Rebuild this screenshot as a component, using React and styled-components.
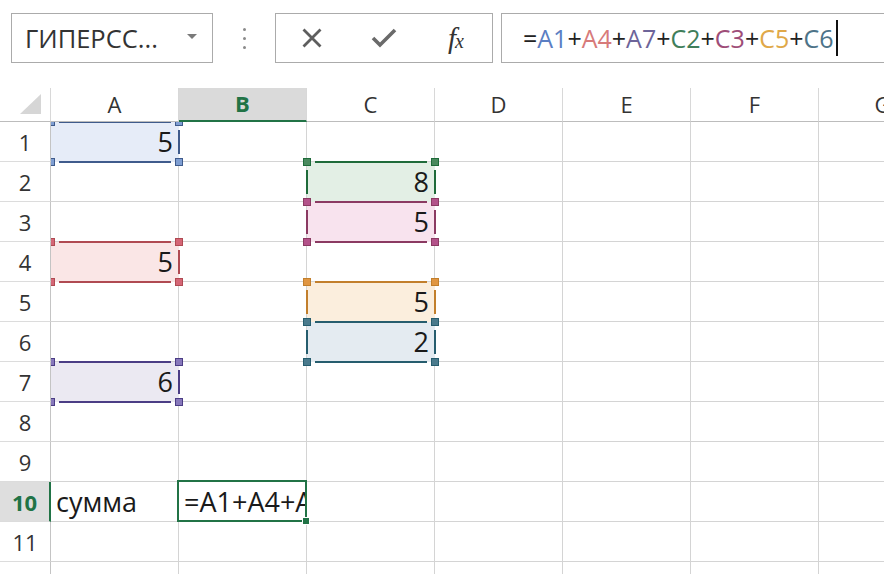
import React from 'react'
import styled, { createGlobalStyle } from 'styled-components'

const COL_W = 128
const ROW_H = 40
const HEAD_W = 51
const HEAD_H = 34
const GREEN = '#217346'

const columns = ['A', 'B', 'C', 'D', 'E', 'F', 'G']
const rows = [1, 2, 3, 4, 5, 6, 7, 8, 9, 10, 11, 12]

const palette = {
  blue: { line: '#3f5b8c', handle: '#7f9ed2', fill: '#e6ecf8', text: '#5a7ec3' },
  red: { line: '#b04a52', handle: '#d46676', fill: '#fae6e6', text: '#d77a7a' },
  purple: { line: '#4b3d85', handle: '#8778bb', fill: '#ebe9f2', text: '#6d6499' },
  green: { line: '#1f6b3a', handle: '#4a8a5e', fill: '#e3efe5', text: '#3f7e5a' },
  magenta: { line: '#8b3a62', handle: '#b3528a', fill: '#f8e3ee', text: '#9e4d78' },
  orange: { line: '#c27f2c', handle: '#e09642', fill: '#fbeedd', text: '#e0a848' },
  teal: { line: '#265d6e', handle: '#4a7a8c', fill: '#e4ebf1', text: '#4d7388' },
}

const ranges = [
  { col: 0, row: 1, c: palette.blue },
  { col: 0, row: 4, c: palette.red },
  { col: 0, row: 7, c: palette.purple },
  { col: 2, row: 2, c: palette.green },
  { col: 2, row: 3, c: palette.magenta },
  { col: 2, row: 5, c: palette.orange },
  { col: 2, row: 6, c: palette.teal },
]

const values = {
  'A1': '5', 'A4': '5', 'A7': '6',
  'C2': '8', 'C3': '5', 'C5': '5', 'C6': '2',
}

const formula = [
  ['=', '#222'], ['A1', palette.blue.text], ['+', '#222'], ['A4', palette.red.text],
  ['+', '#222'], ['A7', palette.purple.text], ['+', '#222'], ['C2', palette.green.text],
  ['+', '#222'], ['C3', palette.magenta.text], ['+', '#222'], ['C5', palette.orange.text],
  ['+', '#222'], ['C6', palette.teal.text],
]

const GlobalStyle = createGlobalStyle`
  html, body {
    margin: 0;
    padding: 0;
    background: #ffffff;
    overflow: hidden;
  }
  body {
    font-family: "Open Sans", "Noto Sans", sans-serif;
    color: #222;
  }
`

const Range = ({ col, row, c }) => (
  <RangeBox $left={col * COL_W} $top={(row - 1) * ROW_H} $fill={c.fill}>
    <EdgeH $color={c.line} $at="top" />
    <EdgeH $color={c.line} $at="bottom" />
    {col > 0 && <EdgeV $color={c.line} $at="left" />}
    <EdgeV $color={c.line} $at="right" />
    <Handle $color={c.handle} $border={c.line} $x="left" $y="top" />
    <Handle $color={c.handle} $border={c.line} $x="right" $y="top" />
    <Handle $color={c.handle} $border={c.line} $x="left" $y="bottom" />
    <Handle $color={c.handle} $border={c.line} $x="right" $y="bottom" />
  </RangeBox>
)

const App = () => {
  return (
    <Page>
      <GlobalStyle />
      <Toolbar>
        <NameBox>
          <span>ГИПЕРСС...</span>
          <DropArrow />
        </NameBox>
        <Dots>
          <Dot />
          <Dot />
          <Dot />
        </Dots>
        <Buttons>
          <ToolButton>
            <svg width="24" height="24" viewBox="0 0 24 24">
              <path d="M3.5 3.5 L20.5 20.5 M20.5 3.5 L3.5 20.5" stroke="#5e5e5e" strokeWidth="2.8" fill="none" />
            </svg>
          </ToolButton>
          <ToolButton>
            <svg width="28" height="24" viewBox="0 0 28 24">
              <path d="M3 12 L10 19 L25 4" stroke="#6a6a6a" strokeWidth="3.6" fill="none" />
            </svg>
          </ToolButton>
          <ToolButton>
            <Fx>f<small>x</small></Fx>
          </ToolButton>
        </Buttons>
        <FormulaBar>
          {formula.map(([t, color], i) => (
            <Token key={i} $color={color}>{t}</Token>
          ))}
          <Caret />
        </FormulaBar>
      </Toolbar>

      <Sheet>
        <Corner>
          <svg width="24" height="22" viewBox="0 0 24 22">
            <polygon points="23,1 23,21 2,21" fill="#d6d6d6" />
          </svg>
        </Corner>
        {columns.map(col => (
          <ColHead key={col} $active={col === 'B'}>{col}</ColHead>
        ))}
        {rows.map(r => (
          <React.Fragment key={r}>
            <RowHead $active={r === 10}>{r < 12 ? r : ''}</RowHead>
            {columns.map(col => {
              const id = col + r
              if (id === 'A10') return <Cell key={id}><Text>сумма</Text></Cell>
              if (id === 'B10') return <Cell key={id}><Text>=A1+A4+A7+C2</Text></Cell>
              return (
                <Cell key={id} $right>
                  {values[id] && <Text>{values[id]}</Text>}
                </Cell>
              )
            })}
          </React.Fragment>
        ))}

        <Overlay>
          {ranges.map((rg, i) => <Range key={i} {...rg} />)}
        </Overlay>

        <ActiveCell>
          <FillHandle />
        </ActiveCell>
      </Sheet>
    </Page>
  )
}

export default App

const Page = styled.div`
  width: 884px;
  height: 574px;
  overflow: hidden;
  background: #fff;
`

const Toolbar = styled.div`
  display: flex;
  align-items: center;
  height: 50px;
  padding: 13px 0 25px 11px;
`

const NameBox = styled.div`
  box-sizing: border-box;
  width: 202px;
  height: 50px;
  border: 1px solid #ababab;
  display: flex;
  align-items: center;
  justify-content: space-between;
  padding: 0 15px 0 13px;
  font-size: 25.5px;
  color: #333;
  background: #fff;
`

const DropArrow = styled.span`
  width: 0;
  height: 0;
  border-left: 5px solid transparent;
  border-right: 5px solid transparent;
  border-top: 5px solid #7a7a7a;
  margin-top: -4px;
`

const Dots = styled.div`
  width: 62px;
  display: flex;
  flex-direction: column;
  align-items: center;
  gap: 6px;
`

const Dot = styled.span`
  width: 3px;
  height: 3px;
  border-radius: 50%;
  background: #8a8a8a;
`

const Buttons = styled.div`
  box-sizing: border-box;
  width: 218px;
  height: 50px;
  border: 1px solid #ababab;
  display: flex;
  background: #fff;
`

const ToolButton = styled.div`
  flex: 1;
  display: flex;
  align-items: center;
  justify-content: center;
`

const Fx = styled.span`
  font-family: "Liberation Serif", "DejaVu Serif", serif;
  font-style: italic;
  font-size: 29px;
  color: #333;
  small {
    font-size: 20px;
    margin-left: -1px;
  }
`

const FormulaBar = styled.div`
  box-sizing: border-box;
  flex: 1;
  height: 50px;
  margin-left: 8px;
  margin-right: -20px;
  border: 1px solid #ababab;
  display: flex;
  align-items: center;
  padding-left: 21px;
  font-size: 25px;
  background: #fff;
`

const Token = styled.span`
  color: ${({ $color }) => $color};
`

const Caret = styled.span`
  width: 2px;
  height: 36px;
  background: #111;
  margin-left: 2px;
`

const Sheet = styled.div`
  position: relative;
  isolation: isolate;
  display: grid;
  grid-template-columns: ${HEAD_W}px repeat(7, ${COL_W}px);
  grid-template-rows: ${HEAD_H}px repeat(12, ${ROW_H}px);
  width: 884px;
  height: 486px;
  overflow: hidden;
`

const Corner = styled.div`
  box-sizing: border-box;
  border-right: 1px solid #d8d8d8;
  border-bottom: 1px solid #bcbcbc;
  display: flex;
  align-items: flex-end;
  justify-content: flex-end;
  padding: 0 8px 6px 0;
`

const ColHead = styled.div`
  box-sizing: border-box;
  display: flex;
  align-items: center;
  justify-content: center;
  font-size: 22px;
  padding-bottom: 2px;
  color: ${({ $active }) => ($active ? GREEN : '#333')};
  font-weight: ${({ $active }) => ($active ? 700 : 400)};
  background: ${({ $active }) => ($active ? '#dadada' : '#fff')};
  border-right: 1px solid #d8d8d8;
  border-bottom: ${({ $active }) => ($active ? `2px solid ${GREEN}` : '1px solid #bcbcbc')};
`

const RowHead = styled.div`
  box-sizing: border-box;
  display: flex;
  align-items: center;
  justify-content: center;
  font-size: 22px;
  color: ${({ $active }) => ($active ? GREEN : '#333')};
  font-weight: ${({ $active }) => ($active ? 700 : 400)};
  background: ${({ $active }) => ($active ? '#dedede' : '#fff')};
  border-right: ${({ $active }) => ($active ? `2px solid ${GREEN}` : '1px solid #c4c4c4')};
  border-bottom: 1px solid #dcdcdc;
`

const Cell = styled.div`
  box-sizing: border-box;
  border-right: 1px solid #d4d4d4;
  border-bottom: 1px solid #d4d4d4;
  display: flex;
  align-items: center;
  justify-content: ${({ $right }) => ($right ? 'flex-end' : 'flex-start')};
  padding: 0 5px 0 5px;
  font-size: 27px;
  color: #1a1a1a;
  overflow: hidden;
  white-space: nowrap;
`

const Text = styled.span`
  position: relative;
  z-index: 2;
`

const Overlay = styled.div`
  position: absolute;
  left: ${HEAD_W}px;
  top: ${HEAD_H}px;
  right: 0;
  bottom: 0;
  overflow: hidden;
  pointer-events: none;
  z-index: 1;
`

const RangeBox = styled.div`
  position: absolute;
  left: ${({ $left }) => $left}px;
  top: ${({ $top }) => $top}px;
  width: ${COL_W}px;
  height: ${ROW_H}px;
  background: ${({ $fill }) => $fill};
`

const EdgeH = styled.span`
  position: absolute;
  left: 8px;
  right: 8px;
  height: 2px;
  ${({ $at }) => ($at === 'top' ? 'top: -1px;' : 'bottom: -1px;')}
  background: ${({ $color }) => $color};
`

const EdgeV = styled.span`
  position: absolute;
  top: 8px;
  bottom: 8px;
  width: 2px;
  ${({ $at }) => ($at === 'left' ? 'left: -1px;' : 'right: -1px;')}
  background: ${({ $color }) => $color};
`

const Handle = styled.span`
  position: absolute;
  box-sizing: border-box;
  width: 8px;
  height: 8px;
  ${({ $x }) => ($x === 'left' ? 'left: -4px;' : 'right: -4px;')}
  ${({ $y }) => ($y === 'top' ? 'top: -4px;' : 'bottom: -4px;')}
  background: ${({ $color }) => $color};
  border: 1px solid ${({ $border }) => $border};
`

const ActiveCell = styled.div`
  position: absolute;
  box-sizing: border-box;
  left: ${HEAD_W + COL_W - 2}px;
  top: ${HEAD_H + 9 * ROW_H - 2}px;
  width: ${COL_W + 2}px;
  height: ${ROW_H + 2}px;
  border: 2px solid ${GREEN};
  z-index: 3;
  pointer-events: none;
`

const FillHandle = styled.span`
  position: absolute;
  right: -5px;
  bottom: -5px;
  width: 6px;
  height: 6px;
  background: ${GREEN};
  border: 1px solid #fff;
`
